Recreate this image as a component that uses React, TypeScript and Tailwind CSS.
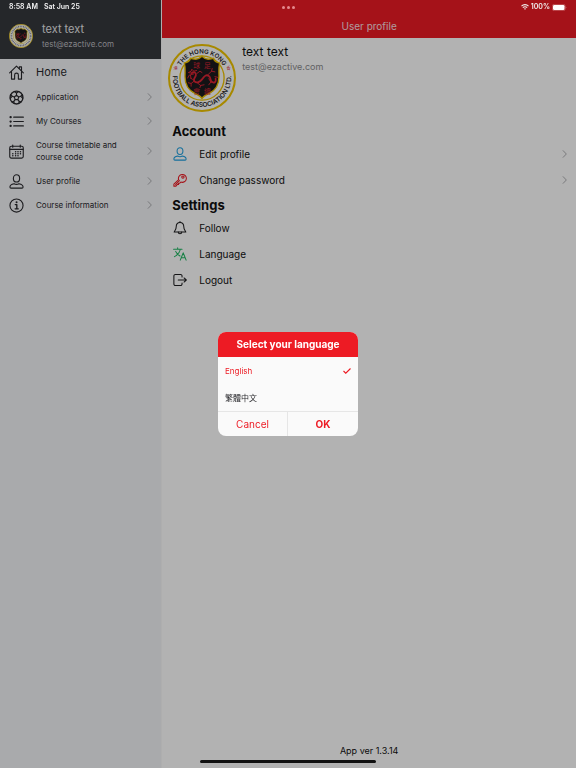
import { useId, useState, ReactNode } from "react";

type IconProps = { className?: string };

const LANGUAGES = [
  { id: "en", label: "English" },
  { id: "zh", label: "繁體中文" },
];

function Svg({ className, children }: IconProps & { children: ReactNode }) {
  return (
    <svg
      viewBox="0 0 24 24"
      fill="none"
      stroke="currentColor"
      strokeWidth="1.8"
      strokeLinecap="round"
      strokeLinejoin="round"
      aria-hidden="true"
      className={`shrink-0 ${className ?? ""}`}
    >
      {children}
    </svg>
  );
}

function HomeIcon({ className }: IconProps) {
  return (
    <Svg className={className}>
      <path d="M1 12.500 12 1.800l11 10.700" />
      <path d="M4 10.500V22.500h5V16a3 3 0 0 1 6 0v6.500h5V10.500" />
      <path d="M16.500 5.500V3H20v6" />
    </Svg>
  );
}

function BallIcon({ className }: IconProps) {
  return (
    <Svg className={className}>
      <circle cx="12" cy="12" r="10.300" strokeWidth="2.200" />
      <path d="m12 8.500 3.500 2.700-1.300 4.100H9.800l-1.300-4.100z" />
      <path d="M12 8.500V5M15.500 11.200l3.500-1.200M14.200 15.300l2.200 3M9.800 15.300l-2.200 3M8.500 11.200 5 10" />
      <path d="m8.500 2.500 3.500 2.500 3.500-2.500M21.500 7.500 19 10l3 3.300M19.500 18.800l-3.100-.5-.9 3.400M8.500 21.700l-.9-3.400-3.100.5M2 13.300 5 10 2.500 7.500" />
    </Svg>
  );
}

function ListIcon({ className }: IconProps) {
  return (
    <Svg className={className}>
      <path d="M7.500 5H23M7.500 12H23M7.500 19H23" />
      <path d="M2.500 5h.2M2.500 12h.2M2.500 19h.2" strokeWidth="3.600" />
    </Svg>
  );
}

function CalendarIcon({ className }: IconProps) {
  return (
    <Svg className={className}>
      <rect x="1.200" y="3.500" width="21.600" height="19" rx="2.500" />
      <path d="M1.500 8.500h21M6 1.500V5M18 1.500V5" />
      <path
        d="M10.500 12.500h.2M14.300 12.500h.2M18.200 12.500h.2M6 15.500h.2M10.500 15.500h.2M14.300 15.500h.2M18.200 15.500h.2M6 18.700h.2M10.500 18.700h.2M14.300 18.700h.2"
        strokeWidth="2.300"
      />
    </Svg>
  );
}

function UserIcon({ className }: IconProps) {
  return (
    <Svg className={className}>
      <ellipse cx="12" cy="7" rx="5" ry="5.800" />
      <path d="M8 15.500c-4 .8-6.500 2.500-6.500 5.200 0 1 .6 1.800 1.700 1.800h17.600c1.100 0 1.700-.8 1.700-1.800 0-2.700-2.500-4.400-6.500-5.200a8 8 0 0 1-8 0z" />
    </Svg>
  );
}

function InfoIcon({ className }: IconProps) {
  return (
    <Svg className={className}>
      <circle cx="12" cy="12" r="10.500" />
      <path d="M10 10.500h2.500V17M9.800 17.300h5" strokeWidth="2.200" />
      <path d="M12 6.800h.2" strokeWidth="3" />
    </Svg>
  );
}

function KeyIcon({ className }: IconProps) {
  return (
    <Svg className={className}>
      <path d="M9.700 11.500a6.800 6.800 0 1 1 3.800 4L11.500 17.500H9.500v2h-2l-2.500 3H1.500V19z" />
      <path d="M4.500 19.500l6.500-6.500" />
      <circle cx="17" cy="7" r="2" />
    </Svg>
  );
}

function BellIcon({ className }: IconProps) {
  return (
    <Svg className={className}>
      <path d="M12 2.500c-4.500 0-6.500 3.500-6.500 7.500 0 5-2.500 6-3.500 9h20c-1-3-3.500-4-3.500-9 0-4-2-7.500-6.500-7.500z" />
      <path d="M12 2.500V1M9 19a3 3 0 0 0 6 0" />
    </Svg>
  );
}

function TranslateIcon({ className }: IconProps) {
  return (
    <Svg className={className}>
      <path d="M1 4h14.500M8 4V1.500M12.500 4c-1 5.500-4.500 9.500-10 12.500M4.500 7.500c1.500 3.500 4.500 6 7.500 8" />
      <path d="m12.500 22.500 5-12.500 5 12.500M14.500 18.500h6" />
    </Svg>
  );
}

function LogoutIcon({ className }: IconProps) {
  return (
    <Svg className={className}>
      <path d="M15.500 7V5a2.500 2.500 0 0 0-2.500-2.500H4A2.500 2.500 0 0 0 1.500 5v14A2.500 2.500 0 0 0 4 21.500h9a2.500 2.500 0 0 0 2.500-2.500v-2" />
      <path d="M9 12h13.500M19 8.500l3.800 3.500-3.800 3.500" />
    </Svg>
  );
}

function Chevron() {
  return (
    <svg viewBox="0 0 6 10" fill="none" stroke="currentColor" aria-hidden="true" className="h-2 w-[5px] shrink-0 text-[#999b9e]">
      <path d="m1 .5 4.300 4.500L1 9.500" />
    </svg>
  );
}

// The lettering is unreadable at avatar size, so it only shows on the large crest
function Crest({ className, lettering = false }: IconProps & { lettering?: boolean }) {
  const id = useId();
  return (
    <svg viewBox="0 0 100 100" role="img" aria-label="The Hong Kong Football Association Ltd." className={`shrink-0 ${className ?? ""}`}>
      <defs>
        <path id={`${id}top`} d="M14 50a36 36 0 0 1 72 0" />
        <path id={`${id}low`} d="M7.500 43a43 43 0 1 0 85 0" />
      </defs>
      <circle cx="50" cy="50" r="48.500" fill="#fff" stroke="#f0c400" strokeWidth="3" />
      <circle cx="50" cy="50" r="32.500" fill="#fff" stroke="#f0c400" strokeWidth="2" />
      {lettering ? (
        <g fill="#29292b" fontFamily="Inter, sans-serif" fontWeight="600" textAnchor="middle">
          <text fontSize="9"><textPath href={`#${id}top`} startOffset="50%">THE HONG KONG</textPath></text>
          <text fontSize="9.500"><textPath href={`#${id}low`} startOffset="50%">FOOTBALL ASSOCIATION LTD.</textPath></text>
        </g>
      ) : (
        <circle cx="50" cy="50" r="40" fill="none" stroke="#8c8c96" strokeWidth="7" strokeDasharray="4 3" />
      )}
      <path
        d="M50 18c4 4 8 5 12 4l5-1c1 4 4 6 9 7-2 7-1 13-1 20 0 14-7 21-15 25-4 2-7 3-10 7-3-4-6-5-10-7-8-4-15-11-15-25 0-7 1-13-1-20 5-1 8-3 9-7l5 1c4 1 8 0 12-4z"
        fill="#1c1b1e"
        stroke="#f0c400"
        strokeWidth="2"
      />
      {lettering && (
        <g fill="#dc2434" fontFamily="'Noto Sans CJK TC', sans-serif" textAnchor="middle">
          <text x="11" y="38" fontSize="6">港</text>
          <text x="89" y="38" fontSize="6">香</text>
          <text x="42" y="36" fontSize="10">球</text>
          <text x="58" y="36" fontSize="10">足</text>
          <text x="42" y="73" fontSize="10">會</text>
          <text x="58" y="73" fontSize="10">總</text>
        </g>
      )}
      <g fill="none" stroke="#dc2434" strokeLinecap="round" strokeLinejoin="round">
        <path d="M35 43c3-3 7-1 6 3s-5 6-2 9 8 1 11-3 6-8 10-5 1 7 5 9 6-1 5-5" strokeWidth="2.600" />
        <path d="M35 43l-5-1 4-2 1-3 3 3 4-1m-4 5-7 2-2 4m4-4 1 5m4 4-4 3-4-1m4 1v4m9-5 5 4 5-1m-5 1-1 3m12-19 5-5 5 1m-5-1 1-4m-5 15 3 5 5 1m-5-1-3 4m9-12 4 1m-30-6 4-3 3 2m-17 8 3 2" strokeWidth="1.400" />
      </g>
    </svg>
  );
}

const MENU = [
  { label: "Application", icon: BallIcon },
  { label: "My Courses", icon: ListIcon },
  { label: "Course timetable and course code", icon: CalendarIcon },
  { label: "User profile", icon: UserIcon },
  { label: "Course information", icon: InfoIcon },
];

const SECTIONS = [
  {
    title: "Account",
    items: [
      { label: "Edit profile", icon: UserIcon, color: "text-[#1fa0e0]", more: true },
      { label: "Change password", icon: KeyIcon, color: "text-[#ed1b24]", more: true },
    ],
  },
  {
    title: "Settings",
    items: [
      { label: "Follow", icon: BellIcon, color: "text-[#1f1f21]", more: false },
      { label: "Language", icon: TranslateIcon, color: "text-[#24b865]", more: false },
      { label: "Logout", icon: LogoutIcon, color: "text-[#1f1f21]", more: false },
    ],
  },
];

function StatusBar() {
  return (
    <div className="pointer-events-none fixed inset-x-0 top-0 z-20 grid h-[14px] grid-cols-3 items-center px-[9px] text-[7px] font-semibold text-[#f0f0f0]">
      <div className="flex gap-[6px]">
        <span>8:58 AM</span>
        <span>Sat Jun 25</span>
      </div>
      <div className="flex justify-center gap-[2px]">
        <i className="size-[3px] rounded-full bg-[#e58a8e]" />
        <i className="size-[3px] rounded-full bg-[#e58a8e]" />
        <i className="size-[3px] rounded-full bg-[#e58a8e]" />
      </div>
      <div className="flex items-center justify-end gap-[2px]">
        <svg viewBox="0 0 16 12" fill="none" stroke="currentColor" strokeWidth="2.200" className="h-[6px] w-2">
          <path d="M1 4.200a10 10 0 0 1 14 0M3.700 7.200a6 6 0 0 1 8.600 0" />
          <path d="M8 11.500 5.800 9.300a3.200 3.200 0 0 1 4.400 0z" fill="currentColor" stroke="none" />
        </svg>
        <span>100%</span>
        <svg viewBox="0 0 30 14" className="h-[7px] w-[15px]">
          <rect x=".7" y=".7" width="25.600" height="12.600" rx="3.500" fill="none" stroke="#d5888b" />
          <rect x="2" y="2" width="23" height="10" rx="2.500" fill="#fff" />
          <path d="M27.500 5v4c1.600-.6 1.600-3.400 0-4z" fill="#d5888b" />
        </svg>
      </div>
    </div>
  );
}

function Sidebar() {
  return (
    <aside className="w-[28%] shrink-0 bg-[#f3f4f7] text-[#29292d]">
      <div className="flex h-[59px] items-center gap-[9px] bg-[#36383d] px-[9px] pt-[12px]">
        <Crest className="size-6" />
        <div>
          <p className="text-[11px] leading-4 text-[#e8e8ea]">text text</p>
          <p className="text-[8px] leading-[14px] text-[#bcbdc0]">test@ezactive.com</p>
        </div>
      </div>
      <nav>
        <a href="#home" className="flex h-[26px] items-center gap-3 px-[9px] text-[11px]">
          <HomeIcon className="size-[15px]" />
          Home
        </a>
        {MENU.map(({ label, icon: Icon }) => (
          <a key={label} href="#menu" className="flex items-center gap-3 px-[9px] py-[6px] text-[8px] leading-3">
            <Icon className="-my-1 size-[15px]" />
            <span className="flex-1">{label}</span>
            <Chevron />
          </a>
        ))}
      </nav>
    </aside>
  );
}

function Profile() {
  return (
    <main className="flex flex-1 flex-col border-l border-[#fafafa] bg-white text-[#111]">
      <header className="flex h-[38px] items-center justify-center bg-[#ed1b24] pt-[14px]">
        <h1 className="text-[10px] text-[#fbdfe0]">User profile</h1>
      </header>
      <div className="flex gap-[6px] px-[6px] pt-[6px]">
        <Crest lettering className="size-[68px]" />
        <div>
          <p className="text-[12px] leading-4">text text</p>
          <p className="text-[9px] leading-[14px] text-[#8b8b8e]">test@ezactive.com</p>
        </div>
      </div>
      <div className="pt-2">
        {SECTIONS.map((section) => (
          <section key={section.title}>
            <h2 className="px-[10px] text-[13px] leading-[22px] font-bold">{section.title}</h2>
            {section.items.map(({ label, icon: Icon, color, more }) => (
              <button key={label} type="button" className="flex h-[26px] w-full items-center gap-3 px-[9px] pb-[2px] pl-[11px] text-left text-[10px]">
                <Icon className={`size-[14px] ${color}`} />
                <span className="flex-1">{label}</span>
                {more && <Chevron />}
              </button>
            ))}
          </section>
        ))}
      </div>
      <p className="mt-auto pb-[10px] text-center text-[9px] leading-[14px]">App ver 1.3.14</p>
    </main>
  );
}

function LanguageDialog() {
  const [language, setLanguage] = useState("en");

  return (
    <div className="fixed inset-0 z-10 flex items-center justify-center bg-black/30">
      <div role="dialog" aria-labelledby="language-title" className="w-[140px] overflow-hidden rounded-lg bg-[#fafafa] text-[#ed1b24]">
        <h2 id="language-title" className="bg-[#ed1b24] text-center text-[10px] leading-[25px] font-bold text-white">
          Select your language
        </h2>
        {LANGUAGES.map((l) => (
          <label
            key={l.id}
            className={`flex h-[27px] items-center justify-between px-[7px] text-[8px] ${language === l.id ? "" : "text-[#29292d]"}`}
          >
            {l.label}
            <input
              type="radio"
              name="language"
              checked={language === l.id}
              onChange={() => setLanguage(l.id)}
              className="sr-only"
            />
            {language === l.id && (
              <svg viewBox="0 0 16 12" fill="none" stroke="currentColor" strokeWidth="2.200" className="h-[6px] w-2">
                <path d="m1 6 4.500 4.500L15 1" />
              </svg>
            )}
          </label>
        ))}
        <div className="grid h-[25px] grid-cols-2 divide-x divide-[#e6e6e6] border-t border-[#e6e6e6] text-[10px]">
          <button type="button">Cancel</button>
          <button type="button" className="font-bold">OK</button>
        </div>
      </div>
    </div>
  );
}

export default function App() {
  return (
    <div className="flex min-h-screen font-['Inter','Noto_Sans_CJK_TC',sans-serif]">
      <StatusBar />
      <Sidebar />
      <Profile />
      <LanguageDialog />
      <div className="fixed inset-x-0 bottom-[5px] z-20 mx-auto h-[3px] w-[176px] rounded-full bg-[#111]" />
    </div>
  );
}
